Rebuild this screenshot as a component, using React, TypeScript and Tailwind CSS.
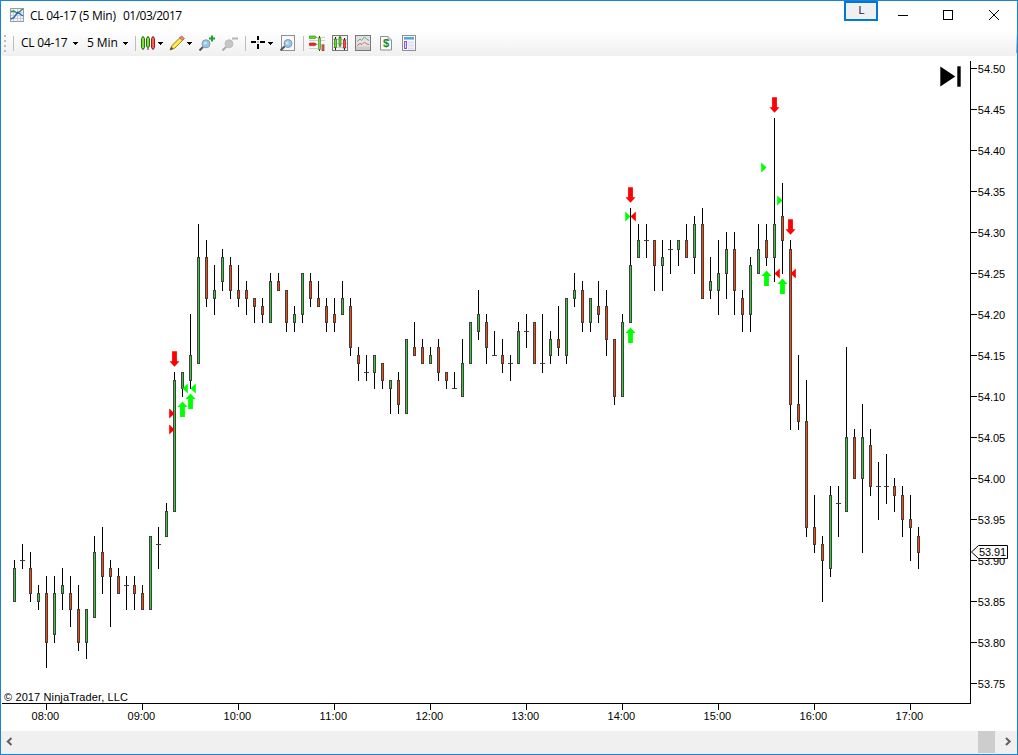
import React from 'react';
import clsx from 'clsx';

// open, high, low, close in cents, one entry per 5 minute bar
type Bar = [number, number, number, number];

const bars: Bar[] = [
  [5385, 5390, 5385, 5389], [5390, 5392, 5389, 5390], [5389, 5391, 5385, 5386], [5385, 5387, 5384, 5386],
  [5386, 5388, 5377, 5380], [5381, 5388, 5380, 5386], [5386, 5389, 5384, 5387], [5386, 5388, 5382, 5384],
  [5384, 5387, 5379, 5380], [5380, 5384, 5378, 5384], [5383, 5393, 5383, 5391], [5391, 5394, 5386, 5388],
  [5389, 5390, 5382, 5388], [5388, 5389, 5386, 5386], [5387, 5388, 5384, 5387], [5387, 5388, 5384, 5386],
  [5386, 5387, 5384, 5384], [5384, 5393, 5384, 5393], [5392, 5394, 5389, 5392], [5393, 5397, 5393, 5396],
  [5396, 5413, 5396, 5412], [5411, 5413, 5410, 5413], [5412, 5420, 5411, 5415], [5414, 5431, 5414, 5427],
  [5427, 5429, 5421, 5422], [5422, 5426, 5420, 5423], [5424, 5428, 5423, 5427], [5426, 5427, 5422, 5423],
  [5423, 5426, 5421, 5422], [5423, 5424, 5420, 5422], [5422, 5422, 5419, 5421], [5421, 5422, 5419, 5420],
  [5419, 5425, 5419, 5424], [5424, 5425, 5423, 5423], [5423, 5423, 5418, 5419], [5419, 5421, 5418, 5420],
  [5420, 5425, 5419, 5425], [5424, 5425, 5421, 5422], [5422, 5424, 5421, 5421], [5421, 5422, 5418, 5419],
  [5420, 5422, 5418, 5419], [5420, 5424, 5420, 5422], [5421, 5422, 5415, 5416], [5415, 5416, 5412, 5414],
  [5413, 5415, 5412, 5413], [5413, 5415, 5411, 5415], [5414, 5414, 5411, 5412], [5411, 5412, 5408, 5412],
  [5412, 5413, 5408, 5409], [5408, 5417, 5408, 5417], [5416, 5419, 5415, 5415], [5416, 5417, 5414, 5414],
  [5414, 5416, 5414, 5415], [5416, 5417, 5412, 5413], [5413, 5413, 5411, 5412], [5411, 5413, 5411, 5411],
  [5410, 5417, 5410, 5414], [5414, 5419, 5414, 5419], [5418, 5423, 5417, 5420], [5419, 5420, 5414, 5416],
  [5415, 5418, 5415, 5415], [5415, 5417, 5413, 5414], [5414, 5415, 5412, 5414], [5414, 5419, 5414, 5418],
  [5418, 5420, 5416, 5418], [5419, 5419, 5414, 5414], [5414, 5420, 5413, 5414], [5415, 5418, 5414, 5417],
  [5417, 5421, 5415, 5416], [5415, 5422, 5414, 5422], [5422, 5425, 5421, 5423], [5423, 5424, 5418, 5419],
  [5419, 5422, 5418, 5422], [5421, 5424, 5419, 5420], [5421, 5423, 5415, 5417], [5417, 5417, 5409, 5410],
  [5410, 5420, 5410, 5419], [5419, 5433, 5419, 5426], [5427, 5431, 5427, 5429], [5429, 5431, 5427, 5429],
  [5429, 5429, 5423, 5426], [5426, 5429, 5423, 5427], [5428, 5429, 5425, 5428], [5428, 5429, 5426, 5429],
  [5429, 5431, 5427, 5427], [5427, 5432, 5425, 5431], [5431, 5433, 5422, 5422], [5423, 5427, 5422, 5424],
  [5423, 5429, 5420, 5425], [5425, 5430, 5422, 5428], [5428, 5430, 5420, 5423], [5422, 5423, 5418, 5420],
  [5420, 5427, 5418, 5426], [5425, 5431, 5425, 5428], [5429, 5431, 5426, 5427], [5427, 5444, 5424, 5431],
  [5432, 5436, 5425, 5429], [5428, 5429, 5406, 5409], [5409, 5415, 5406, 5407], [5407, 5412, 5393, 5394],
  [5394, 5398, 5391, 5392], [5392, 5393, 5385, 5390], [5389, 5399, 5388, 5398], [5397, 5399, 5393, 5397],
  [5396, 5416, 5396, 5405], [5405, 5406, 5400, 5400], [5400, 5409, 5391, 5405], [5404, 5406, 5398, 5399],
  [5399, 5402, 5395, 5399], [5399, 5403, 5397, 5399], [5399, 5400, 5396, 5398], [5398, 5399, 5393, 5395],
  [5395, 5398, 5390, 5394], [5393, 5394, 5389, 5391],
];

const arrows: { bar: number; dir: 'up' | 'down' }[] = [
  { bar: 20, dir: 'down' },
  { bar: 21, dir: 'up' },
  { bar: 22, dir: 'up' },
  { bar: 77, dir: 'down' },
  { bar: 77, dir: 'up' },
  { bar: 94, dir: 'up' },
  { bar: 95, dir: 'down' },
  { bar: 96, dir: 'up' },
  { bar: 97, dir: 'down' },
];

const fills: { bar: number; price: number; side: 'entry' | 'exit'; color: string }[] = [
  { bar: 20, price: 5408, side: 'entry', color: '#ff0000' },
  { bar: 20, price: 5406, side: 'entry', color: '#ff0000' },
  { bar: 21, price: 5411, side: 'exit', color: '#00ff00' },
  { bar: 22, price: 5411, side: 'exit', color: '#00ff00' },
  { bar: 77, price: 5432, side: 'entry', color: '#00ff00' },
  { bar: 77, price: 5432, side: 'exit', color: '#ff0000' },
  { bar: 94, price: 5438, side: 'entry', color: '#00ff00' },
  { bar: 96, price: 5434, side: 'entry', color: '#00ff00' },
  { bar: 95, price: 5425, side: 'exit', color: '#ff0000' },
  { bar: 97, price: 5425, side: 'exit', color: '#ff0000' },
];

const priceTicks = Array.from({ length: 16 }, (_, i) => 5450 - i * 5);
const hours = ['08:00', '09:00', '10:00', '11:00', '12:00', '13:00', '14:00', '15:00', '16:00', '17:00'];

const barX = (i: number) => 13 + i * 8;
const priceY = (p: number) => Math.round(12.39 + (5450 - p) * 8.195);

const Candle: React.FC<{ bar: Bar; x: number }> = ({ bar, x }) => {
  const [open, high, low, close] = bar;
  const top = priceY(Math.max(open, close));
  const bottom = priceY(Math.min(open, close));
  return (
    <g shapeRendering="crispEdges">
      <rect x={x} y={priceY(high)} width={1} height={priceY(low) - priceY(high) + 1} fill="#000" />
      {open === close ? (
        <rect x={x - 2} y={top} width={5} height={1} fill="#404040" />
      ) : (
        <>
          <rect x={x - 1} y={top} width={3} height={bottom - top + 1} fill="#404040" />
          <rect x={x} y={top + 1} width={1} height={bottom - top - 1} fill={close > open ? '#32cd32' : '#ff4500'} />
        </>
      )}
    </g>
  );
};

const Chart: React.FC = () => (
  <svg
    width={1016}
    height={675}
    viewBox="0 0 1016 675"
    className="block shrink-0 bg-white text-[11px] font-['Liberation_Sans',Arial,sans-serif]"
  >
    {bars.map((bar, i) => (
      <Candle key={i} bar={bar} x={barX(i)} />
    ))}

    {/* Trade signals */}
    {arrows.map(({ bar, dir }, i) => {
      const up = dir === 'up';
      const y = up ? priceY(bars[bar][2]) + 5.5 : priceY(bars[bar][1]) - 5.3;
      const d = up
        ? 'M0 0L5 5.5H2.4V15.5H-2.4V5.5H-5Z'
        : 'M0 0L5 -5.5H2.4V-15.5H-2.4V-5.5H-5Z';
      return <path key={i} d={d} transform={`translate(${barX(bar) + 0.5} ${y})`} fill={up ? '#00ff00' : '#ff0000'} />;
    })}
    {fills.map(({ bar, price, side, color }, i) => (
      <path
        key={i}
        d={side === 'entry' ? 'M0 0L-5.3 -5V5Z' : 'M0 0L5.3 -5V5Z'}
        transform={`translate(${barX(bar) + 0.5} ${priceY(price) + 0.6})`}
        fill={color}
      />
    ))}

    {/* Axes */}
    <g shapeRendering="crispEdges">
      <rect x={969} y={5} width={1} height={643} />
      <rect x={1} y={647} width={969} height={1} />
      {priceTicks.map((p) => (
        <rect key={p} x={970} y={priceY(p)} width={6} height={1} />
      ))}
      {hours.map((h, i) => (
        <rect key={h} x={45 + i * 96} y={648} width={1} height={6} />
      ))}
    </g>
    {priceTicks.map((p) => (
      <text key={p} x={976.8} y={priceY(p) + 5} textLength={27.4}>
        {(p / 100).toFixed(2)}
      </text>
    ))}
    {hours.map((h, i) => (
      <text key={h} x={30.6 + i * 96} y={664} textLength={27.6}>
        {h}
      </text>
    ))}

    {/* Last price */}
    <path d="M970.5 496L977.5 489.5H1006.5V502.5H977.5Z" fill="#fff" stroke="#000" />
    <text x={978} y={500} textLength={27}>
      53.91
    </text>

    <text x={3} y={645} textLength={124}>
      © 2017 NinjaTrader, LLC
    </text>

    <path d="M939.3 10.5V30.5L954.3 20.5Z" />
    <rect x={956.3} y={10.3} width={3.4} height={20.4} />
  </svg>
);

const Icon: React.FC<{ className?: string; children: React.ReactNode }> = ({ className, children }) => (
  <svg width={16} height={16} viewBox="0 0 16 16" fill="none" className={clsx('shrink-0', className)}>
    {children}
  </svg>
);

const Caret: React.FC<{ className?: string }> = ({ className }) => (
  <svg width={5} height={3} viewBox="0 0 5 3" className={clsx('shrink-0', className)}>
    <path d="M0 0H5V1H4V2H3V3H2V2H1V1H0Z" />
  </svg>
);

const Separator: React.FC<{ className?: string }> = ({ className }) => (
  <div className={clsx('h-[15px] w-px shrink-0 bg-[#bdbdbd]', className)} />
);

const TitleBar: React.FC = () => (
  <div className="flex h-[29px] shrink-0 items-start">
    <Icon className="mt-[6px] ml-[8px]">
      <rect x={1.5} y={1.5} width={13} height={13} fill="#f4f4fb" stroke="#9a9ab4" />
      <path d="M4.5 2V14M8.5 2V14M11.5 2V14M2 5.5H14M2 8.5H14M2 11.5H14" stroke="#c9c9de" />
      <path d="M2 4.5L5 4L8 6L10 5L14 2" stroke="#2f9a3a" strokeWidth={1.4} />
      <path d="M2 12L5 10.5L8.5 5.5L10.5 6.5L14 9" stroke="#2467b8" strokeWidth={1.4} />
    </Icon>
    <span className="mt-[6px] ml-[5px] w-[152px] text-[12px]/[18px] whitespace-pre text-black">
      <span className="inline-block w-[93px] tracking-[-0.24px]">CL 04-17 (5 Min)</span>
      <span className="tracking-[-0.5px]">01/03/2017</span>
    </span>
    <div className="ml-auto flex h-5 w-[34px] items-center justify-center border-2 border-[#0078d7] bg-[#f0f0f0] pb-px pl-px text-[11px] text-[#202040] font-['Liberation_Sans',Arial,sans-serif]">
      L
    </div>
    <svg width={139} height={29} viewBox="0 0 139 29" fill="none" stroke="#000" className="shrink-0">
      <path d="M20 14.5H30" shapeRendering="crispEdges" />
      <rect x={65.5} y={9.5} width={9} height={9} shapeRendering="crispEdges" />
      <path d="M111 9L121 19M121 9L111 19" />
    </svg>
  </div>
);

const Toolbar: React.FC = () => (
  <div className="flex h-[26px] shrink-0 items-center rounded-b-[3px] bg-linear-to-b from-white to-[#f0f0f0] text-[12px]/[18px] text-black">
    <div className="ml-[3px] flex w-[2px] shrink-0 flex-col gap-[3px]">
      {[0, 1, 2, 3].map((i) => (
        <div key={i} className="size-[2px] bg-[#bdbdbd]" />
      ))}
    </div>
    <Separator className="ml-[7px]" />
    <span className="ml-[7px] w-[52px] shrink-0 tracking-[-0.22px] whitespace-nowrap">CL 04-17</span>
    <Caret />
    <span className="ml-[9px] w-[36px] shrink-0 tracking-[-0.1px] whitespace-nowrap">5 Min</span>
    <Caret />
    <Separator className="ml-[7px]" />
    <Icon className="ml-[4px]">
      <path d="M3 1V15M8 1V15M13 1V15" stroke="#333" />
      <rect x={1.5} y={2.5} width={3} height={11} rx={1} fill="#7be03c" stroke="#24750f" />
      <rect x={6.5} y={2.5} width={3} height={9.5} rx={1} fill="#7be03c" stroke="#24750f" />
      <rect x={11.5} y={2.5} width={3} height={11} rx={1} fill="#f0625d" stroke="#a11b1b" />
    </Icon>
    <Caret className="ml-[2px]" />
    <Icon className="ml-[6px]">
      <path d="M1 15L3 10.5L12 1.5L15 4L6 13Z" fill="#f5dc32" stroke="#a98a1c" />
      <path d="M4.5 12L12.5 4" stroke="#fff27a" strokeWidth={1.4} />
      <path d="M10.5 3L12.5 1L15.5 3.5L13.5 5.5Z" fill="#e6878c" stroke="#ad6060" strokeWidth={0.8} />
      <path d="M1 15L2.2 11.8L4.3 14Z" fill="#444" />
    </Icon>
    <Caret className="ml-[2px]" />
    <Icon className="ml-[7px]">
      <path d="M0.5 15.5L4 12" stroke="#555" strokeWidth={2} />
      <circle cx={7} cy={8.8} r={4} fill="#91c6ee" stroke="#8c9aa5" />
      <circle cx={6.3} cy={8} r={1.6} fill="#c8e5fa" />
      <path d="M13 0.5V6.5M10 3.5H16" stroke="#18a329" strokeWidth={2} />
    </Icon>
    <Icon className="ml-[7px]">
      <path d="M0.5 15.5L4 12" stroke="#aaa" strokeWidth={2} />
      <circle cx={7} cy={8.8} r={4} fill="#c6c6c6" stroke="#bdbdbd" />
      <path d="M10 3.5H16" stroke="#b5b5b5" strokeWidth={2} />
    </Icon>
    <Separator className="ml-[7px]" />
    <Icon className="ml-[5px]">
      <path d="M0 7H5M9 7H14M7 1V5M7 9V14" stroke="#000" strokeWidth={2} shapeRendering="crispEdges" />
      <rect x={6.5} y={6.5} width={1} height={1} fill="#000" />
    </Icon>
    <Caret className="ml-px" />
    <Icon className="ml-[7px]">
      <rect x={1.5} y={0.5} width={13} height={15} fill="#fafafa" stroke="#8e8e96" />
      <path d="M0.5 15.5L5 11" stroke="#555" strokeWidth={2} />
      <circle cx={8} cy={8.5} r={4} fill="#91c6ee" stroke="#8c9aa5" />
      <circle cx={7.2} cy={7.8} r={1.6} fill="#c8e5fa" />
    </Icon>
    <Separator className="ml-[7px]" />
    <Icon className="ml-[5px]">
      <path d="M8 2.5H16M0 5.5H16M8 9.5H16M0 13.5H9" stroke="#cfcfcf" />
      <path d="M0.5 1H6L7.6 2.3L6 3.6H0.5Z" fill="#5fdc18" stroke="#267a12" strokeWidth={0.6} />
      <path d="M0.5 8H6L7.6 9.3L6 10.6H0.5Z" fill="#ee2a20" stroke="#8f1712" strokeWidth={0.6} />
      <path d="M10.5 1V16" stroke="#333" />
      <rect x={9.5} y={3} width={2} height={11.5} fill="#7be03c" stroke="#348617" strokeWidth={0.6} />
      <rect x={13} y={10} width={2} height={5.7} fill="#f0625d" stroke="#8f1712" strokeWidth={0.6} />
    </Icon>
    <Icon className="ml-[7px]">
      <rect x={0.5} y={0.5} width={15} height={15} fill="#f2f2f2" stroke="#77777c" />
      <path d="M1 4.5H15M1 8.5H15M1 12.5H15" stroke="#c8c8c8" />
      <path d="M3.5 2V15M8 1V12M12.5 3V15" stroke="#222" />
      <rect x={2.5} y={4} width={2} height={8.5} fill="#6be01f" stroke="#24750f" strokeWidth={0.7} />
      <rect x={7} y={2.5} width={2} height={7.5} fill="#6be01f" stroke="#24750f" strokeWidth={0.7} />
      <rect x={11.5} y={5} width={2} height={8} fill="#f0514d" stroke="#a11b1b" strokeWidth={0.7} />
    </Icon>
    <Icon className="ml-[7px]">
      <rect x={0.5} y={0.5} width={15} height={15} fill="#e2e2e2" stroke="#77777c" />
      <path d="M1 11.5H15V15H1Z" fill="#cbcbcb" />
      <path d="M2 6.5L5 4L6.5 5.5L9.5 2L11.5 4L14 5.5" stroke="#4caa84" strokeWidth={0.9} />
      <path d="M2 10.5L5 8.5L7 9.5L9.5 7L11.5 9L14 9.5" stroke="#e0565a" strokeWidth={0.9} />
    </Icon>
    <Icon className="ml-[7px]">
      <path d="M2.5 1.5H10L13.5 5V15H2.5Z" fill="#fbfbfb" stroke="#8e8e94" />
      <path d="M10 1.5V5H13.5" fill="#d5d5d5" stroke="#a5a5a5" />
      <text x={4.9} y={12} className="text-[11px] font-bold font-['Liberation_Sans',Arial,sans-serif]" fill="#138a25">
        $
      </text>
    </Icon>
    <Icon className="ml-[8px]">
      <rect x={0.5} y={0.5} width={13} height={15} fill="#fafafd" stroke="#8e8e98" />
      <rect x={2} y={2} width={10} height={2.6} fill="#4fabdc" />
      <rect x={2.5} y={6.5} width={2} height={7} fill="#e6d6ff" stroke="#9050ee" />
      <path d="M6 7.5H12M6 10.5H12M6 13.5H12" stroke="#dfdfe9" strokeWidth={2} />
    </Icon>
    <div className="mb-[3px] ml-auto h-[22px] w-px bg-linear-to-b from-white to-[#a0a0a0]" />
  </div>
);

const ScrollBar: React.FC = () => (
  <div className="flex h-[23px] shrink-0 items-start bg-[#f0f0f0]">
    <svg width={17} height={22} viewBox="0 0 17 22" fill="none">
      <path d="M10.5 7L6.8 10.5L10.5 14" stroke="#606060" strokeWidth={2} />
    </svg>
    <div className="ml-auto h-[22px] w-[17px] bg-[#cdcdcd]" />
    <svg width={22} height={22} viewBox="0 0 22 22" fill="none">
      <path d="M11 7L14.7 10.5L11 14" stroke="#606060" strokeWidth={2} />
    </svg>
  </div>
);

export default function App() {
  return (
    <div className="flex h-[755px] w-[1018px] flex-col overflow-hidden border border-[#1883d7] bg-white font-['Open_Sans','Noto_Sans',sans-serif]">
      <TitleBar />
      <Toolbar />
      <Chart />
      <ScrollBar />
    </div>
  );
}
